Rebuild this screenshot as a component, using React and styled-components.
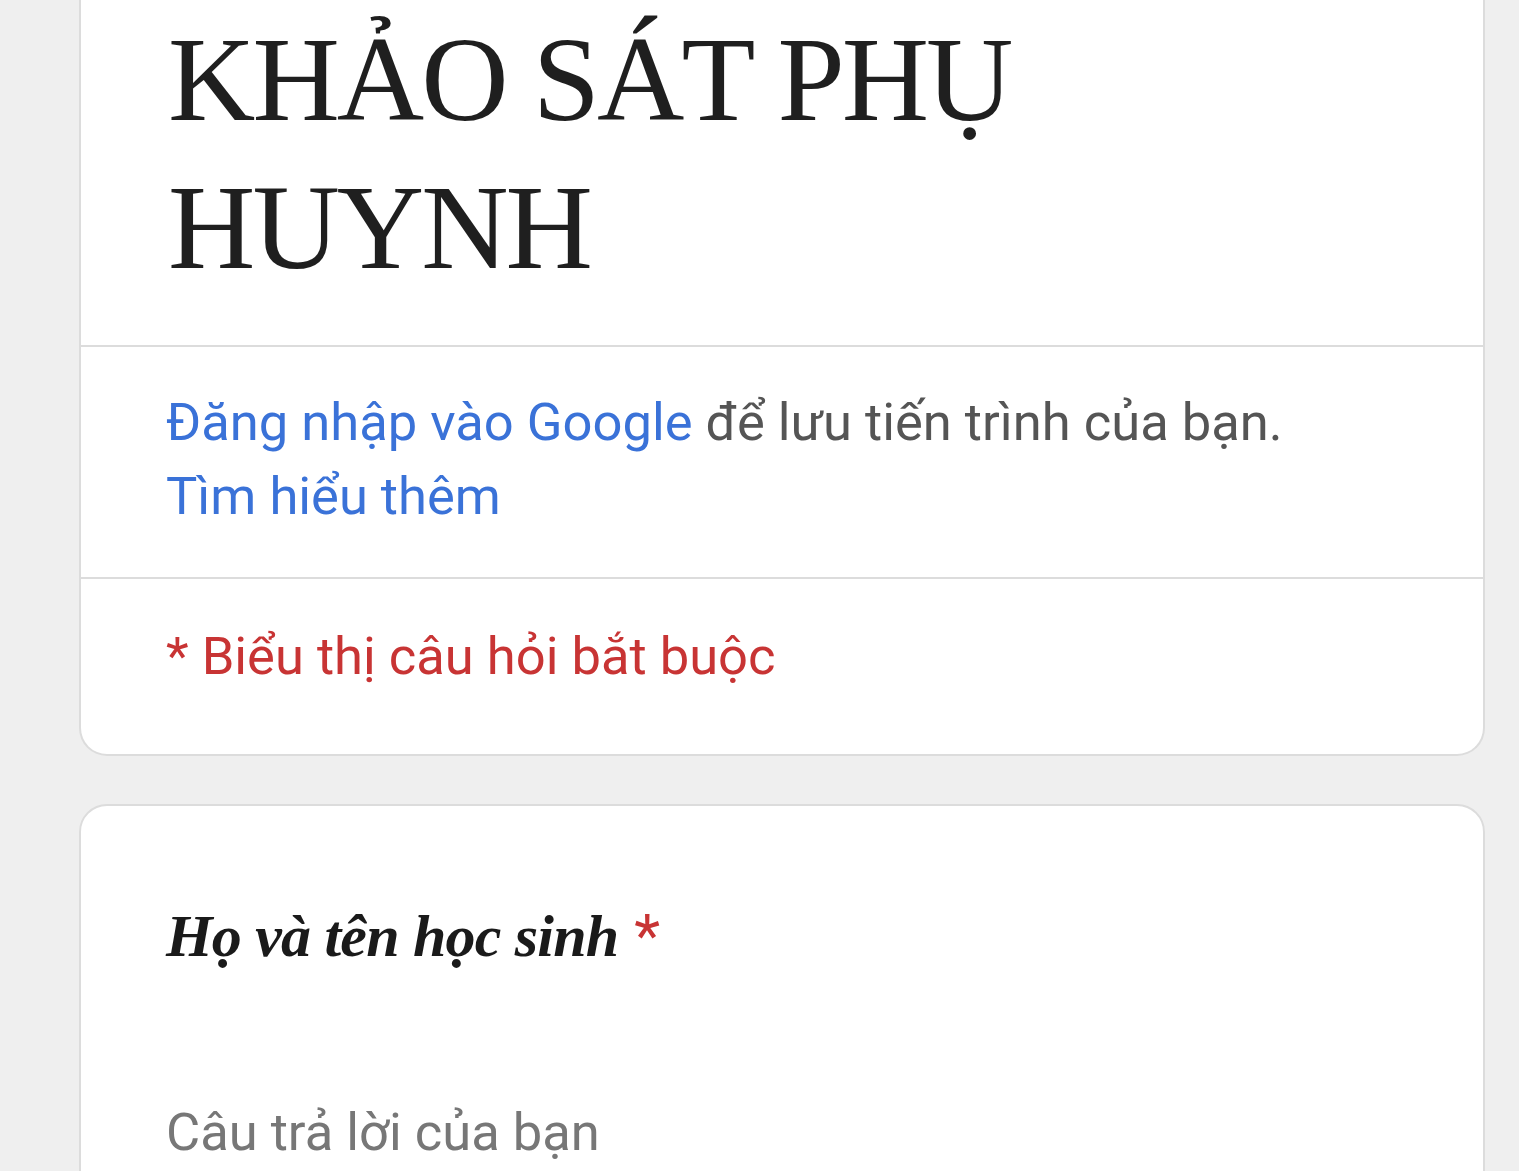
import React from "react";
import styled, { createGlobalStyle } from "styled-components";

const GlobalStyle = createGlobalStyle`
  html, body {
    margin: 0;
    padding: 0;
    background: #efefef;
  }
  body {
    font-family: Roboto, "Noto Sans", sans-serif;
    overflow: hidden;
  }
`;

const Page = styled.div`
  display: flex;
  flex-direction: column;
  gap: 48px;
  padding: 0 34px 0 79px;
  height: 1171px;
  overflow: hidden;
`;

const Card = styled.section`
  background: #fff;
  border: 2px solid #dcdcdc;
  border-radius: 28px;
  ${(p) =>
    p.$cutTop &&
    `
    border-top: none;
    border-top-left-radius: 0;
    border-top-right-radius: 0;
  `}
  display: flex;
  flex-direction: column;
  flex-shrink: 0;
`;

const Section = styled.div`
  padding: ${(p) => p.$pad};
  & + & {
    border-top: 2px solid #dcdcdc;
  }
`;

const Title = styled.h1`
  margin: 0;
  padding-left: 87px;
  font-family: "Liberation Serif", "Times New Roman", serif;
  font-weight: 400;
  font-size: 121px;
  line-height: 148px;
  letter-spacing: -3px;
  color: #1f1f1f;
  max-width: 900px;
`;

const Info = styled.p`
  margin: 0;
  padding-left: 85px;
  font-size: 52.5px;
  line-height: 74px;
  color: #555;
`;

const Link = styled.a`
  color: #3a72d8;
  text-decoration: none;
`;

const Required = styled.p`
  margin: 0;
  padding-left: 85px;
  font-size: 52.5px;
  line-height: 74px;
  color: #c83434;
`;

const Question = styled.h2`
  margin: 0;
  padding-left: 85px;
  font-family: "Liberation Serif", "Times New Roman", serif;
  font-style: italic;
  font-weight: 700;
  font-size: 60px;
  line-height: 80px;
  letter-spacing: -0.8px;
  color: #1a1a1a;
`;

const Star = styled.span`
  font-family: Roboto, sans-serif;
  font-style: normal;
  font-weight: 400;
  letter-spacing: 0;
  color: #c83434;
  margin-left: 16px;
`;

const Answer = styled.div`
  margin-top: 119px;
  padding-left: 85px;
  font-size: 52.5px;
  line-height: 74px;
  color: #777;
`;

export default function App() {
  return (
    <>
      <GlobalStyle />
      <Page>
        <Card $cutTop>
          <Section $pad="5px 0 44px">
            <Title>KHẢO SÁT PHỤ HUYNH</Title>
          </Section>
          <Section $pad="38px 0 44px">
            <Info>
              <Link href="#">Đăng nhập vào Google</Link> để lưu tiến trình của bạn.
              <br />
              <Link href="#">Tìm hiểu thêm</Link>
            </Info>
          </Section>
          <Section $pad="40px 0 61px">
            <Required>* Biểu thị câu hỏi bắt buộc</Required>
          </Section>
        </Card>
        <Card>
          <Section $pad="90px 0 40px">
            <Question>
              Họ và tên học sinh<Star>*</Star>
            </Question>
            <Answer>Câu trả lời của bạn</Answer>
          </Section>
        </Card>
      </Page>
    </>
  );
}
